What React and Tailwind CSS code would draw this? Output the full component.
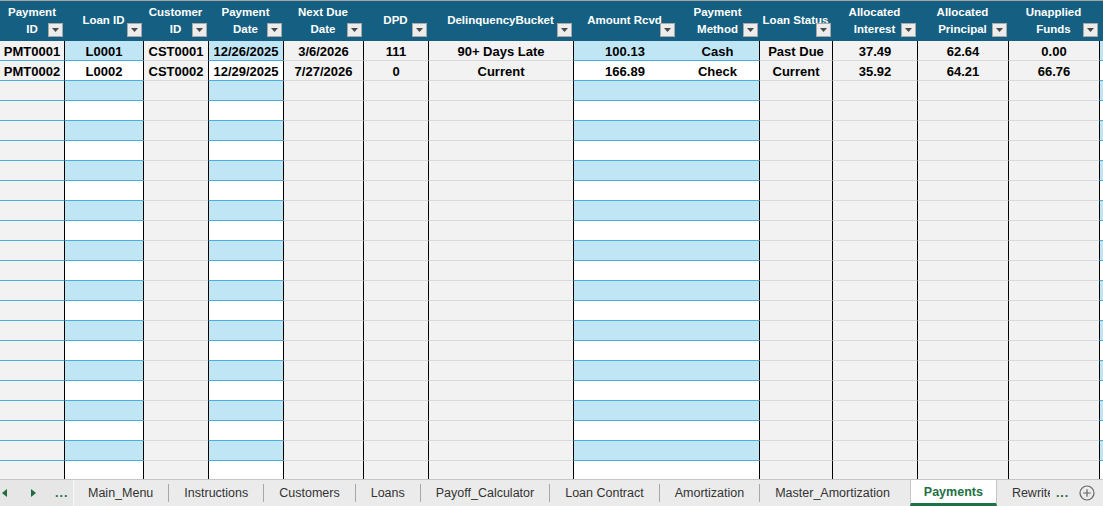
import React from 'react'

// Column layout of the Payments table. `edge` puts a black rule on the left
// of the body cells, `fill` picks the body style.
const COLUMNS = [
  { key: 'id', label: ['Payment', 'ID'], w: 'w-[64px]', fill: 'grayBlue' },
  { key: 'loan', label: ['Loan ID'], w: 'w-[79px]', fill: 'band', edge: true },
  { key: 'cust', label: ['Customer', 'ID'], w: 'w-[65px]', fill: 'gray', edge: true },
  { key: 'date', label: ['Payment', 'Date'], w: 'w-[75px]', fill: 'band', edge: true },
  { key: 'due', label: ['Next Due', 'Date'], w: 'w-[80px]', fill: 'gray', edge: true },
  { key: 'dpd', label: ['DPD'], w: 'w-[65px]', fill: 'gray', edge: true },
  { key: 'bucket', label: ['DelinquencyBucket'], w: 'w-[145px]', fill: 'gray', edge: true },
  { key: 'amt', label: ['Amount Rcvd'], w: 'w-[103px]', fill: 'band', edge: true },
  { key: 'method', label: ['Payment', 'Method'], w: 'w-[83px]', fill: 'band' },
  { key: 'status', label: ['Loan Status'], w: 'w-[73px]', fill: 'gray', edge: true },
  { key: 'int', label: ['Allocated', 'Interest'], w: 'w-[85px]', fill: 'gray', edge: true },
  { key: 'prin', label: ['Allocated', 'Principal'], w: 'w-[91px]', fill: 'gray', edge: true },
  { key: 'unap', label: ['Unapplied', 'Funds'], w: 'w-[91px]', fill: 'gray', edge: true },
  { key: 'more', label: [''], w: 'w-[40px]', fill: 'band', edge: true, noFilter: true },
]

const ROWS = [
  {
    id: 'PMT0001', loan: 'L0001', cust: 'CST0001', date: '12/26/2025', due: '3/6/2026',
    dpd: '111', bucket: '90+ Days Late', amt: '100.13', method: 'Cash', status: 'Past Due',
    int: '37.49', prin: '62.64', unap: '0.00',
  },
  {
    id: 'PMT0002', loan: 'L0002', cust: 'CST0002', date: '12/29/2025', due: '7/27/2026',
    dpd: '0', bucket: 'Current', amt: '166.89', method: 'Check', status: 'Current',
    int: '35.92', prin: '64.21', unap: '66.76',
  },
]

const ROW_COUNT = 23

const TABS = [
  'Main_Menu',
  'Instructions',
  'Customers',
  'Loans',
  'Payoff_Calculator',
  'Loan Contract',
  'Amortization',
  'Master_Amortization',
]

function FilterButton() {
  return (
    <span className="absolute right-[1px] bottom-[4px] flex h-[14px] w-[15px] items-center justify-center border border-[#a9a9a9] bg-[#ececec]">
      <svg width="7" height="4" viewBox="0 0 7 4">
        <polygon points="0,0 7,0 3.5,4" fill="#4a4a4a" />
      </svg>
    </span>
  )
}

function HeaderCell({ col }) {
  return (
    <div className={`relative flex h-full shrink-0 items-center justify-center ${col.w}`}>
      <div className="text-center text-[11.5px] leading-[17.5px] font-bold whitespace-nowrap text-white">
        {col.label.map((line, i) => (
          <div key={i}>{line}</div>
        ))}
      </div>
      {!col.noFilter && <FilterButton />}
    </div>
  )
}

function bodyClass(fill, odd) {
  if (fill === 'band') {
    return odd ? 'bg-[#c0e6f5] border-b-[#45b0e1]' : 'bg-white border-b-[#45b0e1]'
  }
  if (fill === 'grayBlue') return 'bg-[#f2f2f2] border-b-[#45b0e1]'
  return 'bg-[#f2f2f2] border-b-[#d9d9d9]'
}

function BodyRow({ index }) {
  const data = ROWS[index]
  const odd = index % 2 === 0
  return (
    <div className="flex h-[20px] shrink-0">
      {COLUMNS.map((col) => (
        <div
          key={col.key}
          className={`flex shrink-0 items-center justify-center border-b ${col.w} ${
            col.edge ? 'border-l border-l-black' : ''
          } ${bodyClass(col.fill, odd)}`}
        >
          <span className="pt-px text-[13px] leading-none font-bold whitespace-nowrap text-black">
            {data ? data[col.key] : ''}
          </span>
        </div>
      ))}
    </div>
  )
}

function SheetTabs() {
  return (
    <div className="flex h-[27px] shrink-0 items-stretch border-t border-[#c6c6c6] bg-[#ebebeb] font-['Liberation_Sans',sans-serif] text-[12.5px] text-[#333]">
      <div className="flex w-[74px] shrink-0 items-center border-r border-[#f8f8f8] bg-[#e6e6e6]">
        <svg className="ml-[2px]" width="5" height="8" viewBox="0 0 5 8">
          <polygon points="5,0 5,8 0,4" fill="#1e6b3f" />
        </svg>
        <svg className="ml-[24px]" width="5" height="8" viewBox="0 0 5 8">
          <polygon points="0,0 0,8 5,4" fill="#1e6b3f" />
        </svg>
        <span className="ml-[19px] font-bold tracking-[1px] text-[#1e6b3f]">...</span>
      </div>
      {TABS.map((tab, i) => (
        <div key={tab} className="flex shrink-0 items-center">
          {i > 0 && <span className="h-[18px] w-px bg-[#a8a8a8]" />}
          <span className={`${i === 0 ? 'pl-[14px]' : 'pl-[15px]'} pr-[15px] whitespace-nowrap`}>{tab}</span>
        </div>
      ))}
      <div className="ml-[5px] -mt-px flex shrink-0 items-center border-x border-t border-b-[3px] border-[#c6c6c6] border-b-[#1e7145] bg-white px-[13px]">
        <span className="mt-[2px] font-bold text-[#1e7145]">Payments</span>
      </div>
      <div className="flex w-[53px] shrink-0 items-center overflow-hidden pl-[15px]">
        <span className="whitespace-nowrap">Rewrite</span>
      </div>
      <span className="ml-[6px] flex items-center font-bold tracking-[1px] text-[#1e6b3f]">...</span>
      <span className="ml-[10px] flex items-center">
        <svg width="16" height="16" viewBox="0 0 16 16">
          <circle cx="8" cy="8" r="7" fill="none" stroke="#666" strokeWidth="1.2" />
          <path d="M8 4.2v7.6M4.2 8h7.6" stroke="#666" strokeWidth="1.2" />
        </svg>
      </span>
    </div>
  )
}

export default function App() {
  return (
    <div className="flex h-[506px] w-[1103px] flex-col overflow-hidden bg-white font-['Liberation_Sans',Arial,sans-serif]">
      <div className="flex h-[41px] shrink-0 border-t border-[#a6a6a6] bg-[#156082]">
        {COLUMNS.map((col) => (
          <HeaderCell key={col.key} col={col} />
        ))}
      </div>
      <div className="flex min-h-0 flex-1 flex-col overflow-hidden">
        {Array.from({ length: ROW_COUNT }, (_, i) => (
          <BodyRow key={i} index={i} />
        ))}
      </div>
      <SheetTabs />
    </div>
  )
}
